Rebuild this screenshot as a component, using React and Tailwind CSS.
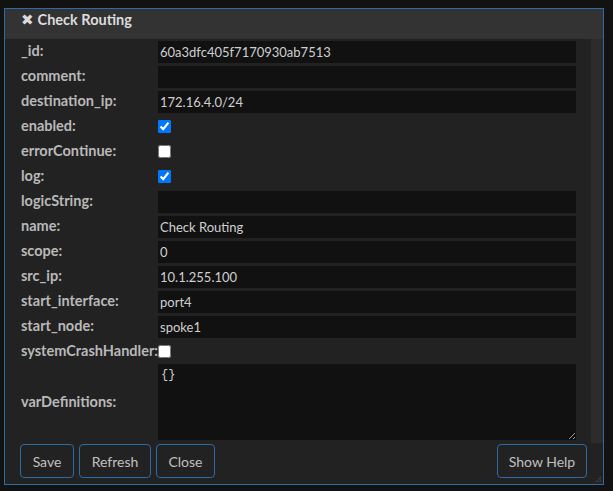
import React from "react";

const rows = [
  { k: "_id", t: "text", v: "60a3dfc405f7170930ab7513" },
  { k: "comment", t: "text", v: "" },
  { k: "destination_ip", t: "text", v: "172.16.4.0/24" },
  { k: "enabled", t: "check", v: true },
  { k: "errorContinue", t: "check", v: false },
  { k: "log", t: "check", v: true },
  { k: "logicString", t: "text", v: "" },
  { k: "name", t: "text", v: "Check Routing" },
  { k: "scope", t: "text", v: "0" },
  { k: "src_ip", t: "text", v: "10.1.255.100" },
  { k: "start_interface", t: "text", v: "port4" },
  { k: "start_node", t: "text", v: "spoke1" },
  { k: "systemCrashHandler", t: "check", v: false },
];

function Btn({ children, w }) {
  return (
    <button
      className={`h-[34px] ${w} rounded-[4px] border border-[#2d6aa6] bg-[#222] text-[14px] text-[#c0c0c0] font-['Lato',sans-serif]`}
    >
      {children}
    </button>
  );
}

export default function App() {
  return (
    <div className="min-h-[491px] w-[613px] bg-[#121212] pl-[4px] pt-[8px] font-['Lato',sans-serif]">
      <div className="relative flex h-[477px] w-[600px] flex-col border border-[#2d6aa6] bg-[#222]">
        <div className="flex h-[30px] items-start bg-[#333] pl-[16px] pt-[1px] text-[14.5px] font-bold leading-[20px] text-[#dcdcdc]">
          <span className="mr-[4px] font-['DejaVu_Sans',sans-serif] text-[15px]">✖</span>
          <span>Check Routing</span>
        </div>
        <div className="flex h-[404px]">
          <div className="flex-1 pl-[16px] pt-[2px]">
            <div className="grid grid-cols-[137px_418px] gap-y-[3px]">
              {rows.map((r) => (
                <React.Fragment key={r.k}>
                  <div className="h-[22px] whitespace-nowrap text-[14.5px] font-bold leading-[19px] text-[#b9b9b9]">
                    {r.k}:
                  </div>
                  {r.t === "text" ? (
                    <div className="h-[22px] bg-[#111] pl-[2px] text-[13px] leading-[22px] text-[#cfcfcf]">
                      {r.v}
                    </div>
                  ) : (
                    <div className="h-[22px] pt-[4px]">
                      <input
                        type="checkbox"
                        defaultChecked={r.v}
                        className="m-0 block h-[13px] w-[13px]"
                      />
                    </div>
                  )}
                </React.Fragment>
              ))}
              <div className="-mt-[2px] flex h-[76px] items-center text-[14.5px] font-bold text-[#b9b9b9]">
                varDefinitions:
              </div>
              <textarea
                defaultValue="{}"
                className="-mt-[2px] block h-[76px] w-[418px] resize-y bg-[#111] px-[3px] pt-[4px] font-['Liberation_Mono',monospace] text-[12px] leading-[15px] text-[#cfcfcf] outline-none"
              />
            </div>
          </div>
          <div className="w-[12px] bg-[#2c2c2c]" />
        </div>
        <div className="flex items-start pl-[15px] pr-[16px] pt-[1px]">
          <div className="flex gap-[5px]">
            <Btn w="w-[54px]">Save</Btn>
            <Btn w="w-[72px]">Refresh</Btn>
            <Btn w="w-[59px]">Close</Btn>
          </div>
          <div className="ml-auto">
            <Btn w="w-[90px]">Show Help</Btn>
          </div>
        </div>
        <svg
          className="absolute bottom-[1px] right-[1px]"
          width="7"
          height="7"
          viewBox="0 0 7 7"
        >
          <path d="M6 1 L1 6 M6 3.5 L3.5 6 M6 5.5 L5.5 6" stroke="#666" strokeWidth="1" strokeDasharray="1 1" />
        </svg>
      </div>
    </div>
  );
}
